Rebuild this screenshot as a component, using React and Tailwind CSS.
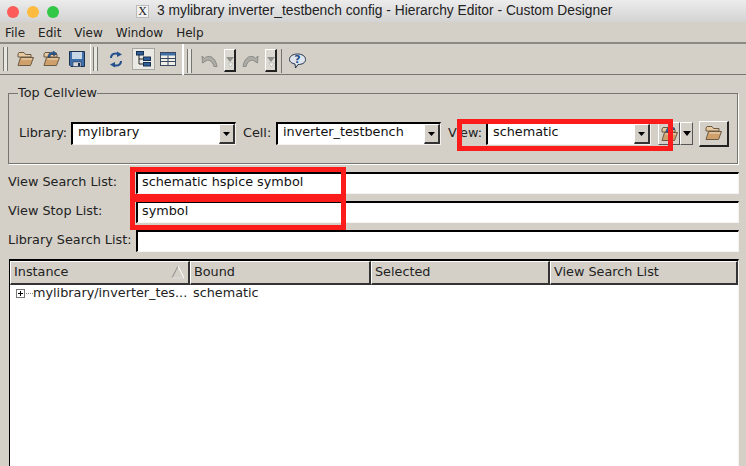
const sans = "font-['DejaVu_Sans',sans-serif]";

function Folder({ arrow = false }) {
  return (
    <svg width="17" height="16" viewBox="0 0 17 16">
      <path d="M1 3 L2 1.5 H7 L8.5 3.5 H14 V6 H1 Z" fill="#e8c9a0" stroke="#6b5a44" strokeWidth="1" />
      <path d="M1 14.5 L3.5 6.5 H16.5 L13.5 14.5 Z" fill="#d0a06c" stroke="#6b5a44" strokeWidth="1" />
      <path d="M4.5 8 H15" stroke="#f0dcc0" strokeWidth="1" />
      {arrow && <path d="M5 6 C5 2 8 0.5 11 1.5 L10 0 L14 2.5 L10.5 5 L11 3 C9 2.5 7 3.5 7 6 Z" fill="#2a5c96" stroke="#17345c" strokeWidth="0.5" />}
    </svg>
  );
}

function Save() {
  return (
    <svg width="16" height="16" viewBox="0 0 16 16">
      <path d="M0.5 0.5 H15.5 V15.5 H2 L0.5 14 Z" fill="#3f6ea8" stroke="#1c3050" />
      <rect x="3" y="1" width="10" height="7" fill="#c9d6e6" />
      <rect x="4" y="11" width="8" height="4.5" fill="#d8d8d8" stroke="#1c3050" strokeWidth="0.5" />
      <rect x="9" y="12" width="2" height="3" fill="#1c3050" />
    </svg>
  );
}

function Refresh() {
  return (
    <svg width="14" height="17" viewBox="0 0 14 17" fill="none">
      <path d="M2 7 C2 3 6 1.5 10 3" stroke="#234f8c" strokeWidth="2" />
      <path d="M8 0.5 L13 3.5 L8 6 Z" fill="#234f8c" />
      <path d="M12 10 C12 14 8 15.5 4 14" stroke="#234f8c" strokeWidth="2" />
      <path d="M6 11 L1 13.5 L6 16.5 Z" fill="#234f8c" />
    </svg>
  );
}

function TreeIcon() {
  return (
    <svg width="15" height="16" viewBox="0 0 15 16">
      <path d="M3 3 V13 H8 M3 8 H8" stroke="#222" fill="none" />
      <rect x="0.5" y="0.5" width="7" height="3.5" fill="#2f5f9a" stroke="#16304f" />
      <rect x="7.5" y="6" width="7" height="3.5" fill="#2f5f9a" stroke="#16304f" />
      <rect x="7.5" y="11.5" width="7" height="3.5" fill="#2f5f9a" stroke="#16304f" />
    </svg>
  );
}

function TableIcon() {
  return (
    <svg width="16" height="14" viewBox="0 0 16 14">
      <rect x="0.5" y="0.5" width="15" height="13" fill="#f0efe9" stroke="#39485c" />
      <rect x="1" y="1" width="14" height="2.5" fill="#3f6ea8" />
      <path d="M8 3.5 V13 M1 6.5 H15 M1 9.5 H15" stroke="#39485c" />
    </svg>
  );
}

function Undo({ flip = false }) {
  return (
    <svg width="17" height="12" viewBox="0 0 17 12" className={flip ? "-scale-x-100" : ""}>
      <path d="M1 1 L1.5 8 L4 6.5 C7 4 11 5 13 11.5 H16 C15 5 11 0.5 6.5 1.5 C5 2 4 2.5 3.5 3.2 Z" fill="#aeaca6" stroke="#8b8a86" />
    </svg>
  );
}

function SplitArrow() {
  return (
    <div className="w-3 h-[23px] shrink-0 bg-[#dcd9d2] border-t border-l border-white border-r-2 border-b-2 border-r-[#222] border-b-[#222] flex items-center justify-center">
      <svg width="8" height="13" viewBox="0 0 8 13">
        <path d="M0 3 H8 L4 8 Z" fill="#8f8f8c" />
        <path d="M2 9 H7 L4.5 13 Z" fill="#f4f4f2" stroke="#a5a5a2" strokeWidth="0.5" />
      </svg>
    </div>
  );
}

function Help() {
  return (
    <svg width="17" height="16" viewBox="0 0 17 16">
      <path d="M8.5 1 C13 1 16.5 3 16.5 6.5 C16.5 10 13 11.5 9 11.5 L6.5 15 L6 11 C3 10.5 0.5 9 0.5 6.5 C0.5 3 4 1 8.5 1 Z" fill="#dfe5ee" stroke="#26344a" />
      <text x="8.5" y="10" textAnchor="middle" fontSize="11" fontWeight="700" fill="#234f8c" fontFamily="DejaVu Sans">?</text>
    </svg>
  );
}

function Grip() {
  return <div className="w-[5px] h-[24px] shrink-0 mx-[1px] bg-[#e8e6e1] border-x border-[#77756f]" />;
}

function Combo({ value }) {
  return (
    <div className="w-[165px] h-[23px] shrink-0 flex bg-white border-t-2 border-l-2 border-t-black border-l-black border-r border-b border-r-[#f4f3ef] border-b-[#f4f3ef]">
      <span className="flex-1 pl-[5px] leading-[16px] text-[12.8px] text-[#111] overflow-hidden whitespace-nowrap">{value}</span>
      <div className="w-[16px] bg-[#d4d0c8] border-t border-l border-white border-r-2 border-b-2 border-r-[#333] border-b-[#333] flex items-center justify-center">
        <svg width="7" height="4" viewBox="0 0 7 4"><path d="M0 0 H7 L3.5 4 Z" fill="#000" /></svg>
      </div>
    </div>
  );
}

function Field({ label, value }) {
  return (
    <div className="flex items-center h-[22px]">
      <span className="w-[136px] pl-[8px] pb-[2px] text-[12.8px] text-[#222] whitespace-nowrap">{label}</span>
      <div className="flex-1 h-[22px] pl-[4px] leading-[15px] text-[12.8px] text-[#111] bg-white border-t-2 border-l-2 border-t-black border-l-black border-r border-b border-r-[#f4f3ef] border-b-[#f4f3ef]">
        {value}
      </div>
    </div>
  );
}

function HeadCell({ width, children, sort }) {
  return (
    <div className={`${width} relative h-[24px] pl-[3px] leading-[19px] text-[12.8px] text-[#222] border-t border-l border-white border-r-2 border-b-2 border-r-[#333] border-b-[#333] whitespace-nowrap`}>
      {children}
      {sort && (
        <svg className="absolute right-[3px] top-[3px]" width="14" height="14" viewBox="0 0 14 14">
          <path d="M7 1 L1 13 H13" fill="none" stroke="#8c8a85" />
          <path d="M7 1 L13 13 H1" fill="none" stroke="#fff" />
        </svg>
      )}
    </div>
  );
}

export default function App() {
  return (
    <div className={`relative w-[746px] h-[466px] overflow-hidden bg-[#d4d0c8] ${sans}`}>
      {/* title bar */}
      <div className="relative h-[22px] pt-[1px] bg-gradient-to-b from-[#ececec] to-[#d3d3d3] flex items-center">
        <div className="flex gap-[8px] pl-[7px]">
          <span className="w-3 h-3 rounded-full bg-[#fc5b57]" />
          <span className="w-3 h-3 rounded-full bg-[#fdbc40]" />
          <span className="w-3 h-3 rounded-full bg-[#33c748]" />
        </div>
        <div className="ml-[77px] flex items-center">
          <span className="w-[13px] h-[13px] bg-[#f1f1f1] border border-[#bbb] text-[12px] leading-[11px] text-center font-['Liberation_Serif',serif] text-[#222] mr-[8px]">X</span>
          <span className="font-['Liberation_Sans',sans-serif] text-[13.8px] text-[#222] whitespace-nowrap">3 mylibrary inverter_testbench config - Hierarchy Editor - Custom Designer</span>
        </div>
      </div>

      {/* menu bar */}
      <div className="h-[22px] pt-[1px] flex items-center gap-[13px] pl-[5px] text-[12px] text-[#222] border-b-2 border-[#8b8983]">
        <span>File</span>
        <span>Edit</span>
        <span>View</span>
        <span>Window</span>
        <span>Help</span>
      </div>

      {/* toolbar */}
      <div className="h-[31px] flex items-center border-b border-[#77756f] pl-[2px]">
        <Grip />
        <div className="flex items-center gap-[9px] pl-[8px] w-[81px]">
          <Folder />
          <Folder arrow />
          <Save />
        </div>
        <div className="w-[1px] h-[30px] bg-white mr-[1px]" />
        <Grip />
        <div className="flex items-center pl-[10px] w-[170px] h-full">
          <Refresh />
          <div className="ml-[9px] w-[23px] h-[22px] flex items-center justify-center bg-[#ebe9e4] border border-[#a9a7a1]">
            <TreeIcon />
          </div>
          <div className="ml-[5px]"><TableIcon /></div>
        </div>
      </div>

      <div className="absolute left-[182px] top-[44px] h-[31px] w-[2px] bg-white" />

      {/* toolbar, disabled part + help */}
      <div className="absolute left-[186px] top-[48px] h-[25px] flex items-center">
        <Grip />
        <div className="ml-[8px]"><Undo /></div>
        <div className="ml-[6px]"><SplitArrow /></div>
        <div className="ml-[6px]"><Undo flip /></div>
        <div className="ml-[6px]"><SplitArrow /></div>
        <div className="w-[1px] h-[24px] bg-[#77756f] ml-[4px]" />
        <div className="ml-[7px]"><Help /></div>
      </div>

      {/* top cellview */}
      <div className="mx-[8px] mt-[18px] relative h-[71px] border border-[#77756f] shadow-[1px_1px_0_#fff] flex items-center pt-[10px] pl-[10px]">
        <span className="absolute left-[9px] -top-[8px] bg-[#d4d0c8] text-[12.8px] leading-[14px] text-[#222]">Top Cellview</span>
        <span className="text-[12.8px] text-[#222] w-[52px] shrink-0 pb-[2px]">Library:</span>
        <Combo value="mylibrary" />
        <span className="text-[12.8px] text-[#222] ml-[7px] w-[33px] shrink-0 pb-[2px]">Cell:</span>
        <Combo value="inverter_testbench" />
        <span className="text-[12.8px] text-[#222] ml-[7px] w-[38px] shrink-0 pb-[2px]">View:</span>
        <Combo value="schematic" />
        <div className="ml-[7px] w-[22px] h-[23px] shrink-0 bg-[#d4d0c8] border-t border-l border-white border-r border-b border-r-[#555] border-b-[#555] flex items-center justify-center">
          <Folder arrow />
        </div>
        <div className="w-[13px] h-[23px] shrink-0 bg-[#d4d0c8] border-t border-l border-white border-r border-b border-r-[#555] border-b-[#555] flex items-center justify-center">
          <svg width="8" height="5" viewBox="0 0 8 5"><path d="M0 0 H8 L4 5 Z" fill="#000" /></svg>
        </div>
        <div className="ml-[6px] w-[30px] h-[26px] shrink-0 bg-[#d4d0c8] border-t border-l border-white border-r-2 border-b-2 border-r-[#222] border-b-[#222] flex items-center justify-center">
          <Folder />
        </div>
      </div>

      {/* lists */}
      <div className="mt-[8px] pr-[7px] flex flex-col gap-[7px]">
        <Field label="View Search List:" value="schematic hspice symbol" />
        <Field label="View Stop List:" value="symbol" />
        <Field label="Library Search List:" value="" />
      </div>

      {/* table */}
      <div className="ml-[9px] mr-[7px] mt-[7px] h-[210px] bg-white border-t-2 border-l border-t-black border-l-black border-r border-r-[#f4f3ef]">
        <div className="flex bg-[#d4d0c8]">
          <HeadCell width="w-[180px]" sort>Instance</HeadCell>
          <HeadCell width="w-[181px]">Bound</HeadCell>
          <HeadCell width="w-[179px]">Selected</HeadCell>
          <HeadCell width="flex-1">View Search List</HeadCell>
        </div>
        <div className="flex items-center h-[16px] text-[12.8px] text-[#222] whitespace-nowrap">
          <svg className="ml-[6px]" width="17" height="9" viewBox="0 0 17 9">
            <rect x="0.5" y="0.5" width="8" height="8" fill="#fff" stroke="#777" />
            <path d="M2 4.5 H7 M4.5 2 V7" stroke="#000" />
            <path d="M10 4.5 H17" stroke="#888" strokeDasharray="1 1" />
          </svg>
          <span className="w-[160px]">mylibrary/inverter_tes...</span>
          <span>schematic</span>
        </div>
      </div>

      {/* red annotation boxes */}
      <div className="absolute left-[457px] top-[119px] w-[216px] h-[32px] border-[5px] border-[#fc1c1c]" />
      <div className="absolute left-[130px] top-[167px] w-[216px] h-[32px] border-[5px] border-[#fc1c1c]" />
      <div className="absolute left-[130px] top-[197px] w-[216px] h-[33px] border-[5px] border-[#fc1c1c]" />
    </div>
  );
}
